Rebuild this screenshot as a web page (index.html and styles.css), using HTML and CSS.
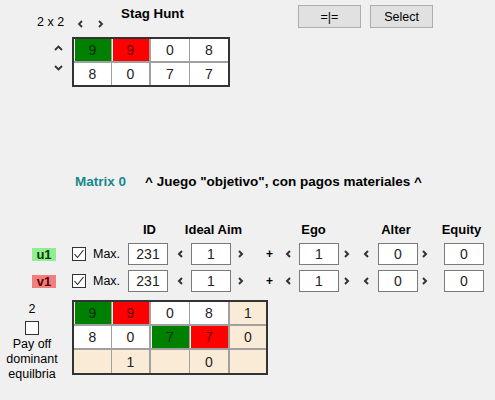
FILE: index.html
```html
<!DOCTYPE html>
<html>
<head>
<meta charset="utf-8">
<title>Stag Hunt</title>
<link rel="stylesheet" href="styles.css">
</head>
<body>
<div class="app">
  <section class="head">
    <div class="gamebox">
      <div class="titlerow">
        <span class="size">2 x 2</span>
        <span class="nav">
          <svg class="chev-h" viewBox="0 0 7 8"><polyline points="5,1 2,4 5,7"/></svg>
          <svg class="chev-h" viewBox="0 0 7 8"><polyline points="2,1 5,4 2,7"/></svg>
        </span>
        <span class="gamename">Stag Hunt</span>
      </div>
      <div class="matrixrow">
        <div class="updown">
          <svg class="chev-v" viewBox="0 0 9 6"><polyline points="1,5 4.5,1.5 8,5"/></svg>
          <svg class="chev-v" viewBox="0 0 9 6"><polyline points="1,1 4.5,4.5 8,1"/></svg>
        </div>
        <div class="matrix m4">
          <div class="cell g">9</div><div class="cell r sep">9</div><div class="cell">0</div><div class="cell">8</div>
          <div class="cell">8</div><div class="cell sep">0</div><div class="cell">7</div><div class="cell">7</div>
        </div>
      </div>
    </div>
    <div class="buttons">
      <button class="btn">=|=</button>
      <button class="btn">Select</button>
    </div>
  </section>

  <div class="caption"><span class="mname">Matrix 0</span><span class="mdesc">^ Juego "objetivo", con pagos materiales ^</span></div>

  <div class="params">
    <div class="hdr">
      <span class="h-id">ID</span>
      <span class="h-aim">Ideal Aim</span>
      <span class="h-ego">Ego</span>
      <span class="h-alter">Alter</span>
      <span class="h-eq">Equity</span>
    </div>
    <div class="row">
      <div class="who">
        <span class="tag u">u1</span>
        <svg class="chk" viewBox="0 0 14 14"><rect x="0.5" y="0.5" width="13" height="13"/><polyline points="2.5,7 5.5,10.5 11.5,3"/></svg>
        <span class="max">Max.</span>
      </div>
      <div class="box">231</div>
      <svg class="arr a1" viewBox="0 0 7 8"><polyline points="5,1 2,4 5,7"/></svg>
      <div class="box b1">1</div>
      <svg class="arr a2" viewBox="0 0 7 8"><polyline points="2,1 5,4 2,7"/></svg>
      <span class="plus">+</span>
      <svg class="arr a3" viewBox="0 0 7 8"><polyline points="5,1 2,4 5,7"/></svg>
      <div class="box b1">1</div>
      <svg class="arr a4" viewBox="0 0 7 8"><polyline points="2,1 5,4 2,7"/></svg>
      <svg class="arr a5" viewBox="0 0 7 8"><polyline points="5,1 2,4 5,7"/></svg>
      <div class="box b2">0</div>
      <svg class="arr a6" viewBox="0 0 7 8"><polyline points="2,1 5,4 2,7"/></svg>
      <div class="box b3">0</div>
    </div>
    <div class="row">
      <div class="who">
        <span class="tag v">v1</span>
        <svg class="chk" viewBox="0 0 14 14"><rect x="0.5" y="0.5" width="13" height="13"/><polyline points="2.5,7 5.5,10.5 11.5,3"/></svg>
        <span class="max">Max.</span>
      </div>
      <div class="box">231</div>
      <svg class="arr a1" viewBox="0 0 7 8"><polyline points="5,1 2,4 5,7"/></svg>
      <div class="box b1">1</div>
      <svg class="arr a2" viewBox="0 0 7 8"><polyline points="2,1 5,4 2,7"/></svg>
      <span class="plus">+</span>
      <svg class="arr a3" viewBox="0 0 7 8"><polyline points="5,1 2,4 5,7"/></svg>
      <div class="box b1">1</div>
      <svg class="arr a4" viewBox="0 0 7 8"><polyline points="2,1 5,4 2,7"/></svg>
      <svg class="arr a5" viewBox="0 0 7 8"><polyline points="5,1 2,4 5,7"/></svg>
      <div class="box b2">0</div>
      <svg class="arr a6" viewBox="0 0 7 8"><polyline points="2,1 5,4 2,7"/></svg>
      <div class="box b3">0</div>
    </div>
  </div>

  <section class="bottom">
    <div class="pay">
      <span class="num">2</span>
      <svg class="chk2" viewBox="0 0 14 14"><rect x="0.5" y="0.5" width="13" height="13"/></svg>
      <span>Pay off</span>
      <span>dominant</span>
      <span>equilbria</span>
    </div>
    <div class="matrix m5">
      <div class="cell g">9</div><div class="cell r sep">9</div><div class="cell">0</div><div class="cell sep">8</div><div class="cell b">1</div>
      <div class="cell">8</div><div class="cell sep">0</div><div class="cell g">7</div><div class="cell r sep">7</div><div class="cell b">0</div>
      <div class="cell b"></div><div class="cell b sep">1</div><div class="cell b"></div><div class="cell b sep">0</div><div class="cell b"></div>
    </div>
  </section>
</div>
</body>
</html>
```

FILE: styles.css
```css
html, body {
  margin: 0;
  padding: 0;
}
body {
  background: #f0f0f0;
  font-family: "Liberation Sans", Arial, sans-serif;
  color: #000;
  width: 495px;
  height: 400px;
  overflow: hidden;
}
svg polyline {
  fill: none;
  stroke: #333;
  stroke-width: 1.8;
}

/* top */
.head {
  display: flex;
  height: 88px;
}
.gamebox {
  margin-left: 37px;
  width: 193px;
  flex: none;
}
.titlerow {
  display: flex;
  align-items: flex-start;
  height: 37px;
}
.size {
  font-size: 12.5px;
  line-height: 14px;
  margin-top: 15px;
}
.nav {
  display: flex;
  gap: 13px;
  margin-left: 13px;
  margin-top: 20px;
}
.chev-h {
  width: 7px;
  height: 8px;
  display: block;
}
.gamename {
  font-weight: bold;
  font-size: 13.3px;
  line-height: 16px;
  margin-left: 17px;
  margin-top: 6px;
}
.matrixrow {
  display: flex;
}
.updown {
  width: 35px;
  flex: none;
  display: flex;
  flex-direction: column;
  gap: 14px;
  padding-top: 8px;
  padding-left: 17px;
  box-sizing: border-box;
}
.chev-v {
  width: 9px;
  height: 6px;
  display: block;
}

/* matrices */
.matrix {
  display: grid;
  border: 2px solid #333;
  background: #a0a0a0;
  column-gap: 1px;
  row-gap: 2px;
  align-self: flex-start;
}
.m4 {
  grid-template-columns: 37px 38px 38px 38px;
  grid-template-rows: 22px 22px;
}
.m5 {
  grid-template-columns: 37px 38px 38px 39px 36px;
  grid-template-rows: 22px 22px 23px;
  margin-left: 8px;
}
.cell {
  background: #fff;
  display: flex;
  align-items: center;
  justify-content: center;
  font-size: 14px;
  color: #222;
}
.cell.sep {
  margin-right: 1px;
}
.cell.g {
  background: #008000;
  color: #0a2d0a;
  box-shadow: inset 1px 0 0 #fff;
}
.cell.r {
  background: #ff0000;
  color: #6e0000;
  box-shadow: inset 1px 0 0 #fff;
}
.cell.b {
  background: #faebd7;
}

/* buttons */
.buttons {
  display: flex;
  gap: 9px;
  margin-left: 68px;
  margin-top: 5px;
  align-self: flex-start;
}
.btn {
  width: 63px;
  height: 23px;
  padding: 0;
  background: #e1e1e1;
  border: 1px solid #adadad;
  border-radius: 0;
  font-family: "Liberation Sans", Arial, sans-serif;
  font-size: 12.5px;
  color: #000;
}

/* caption */
.caption {
  display: flex;
  margin-top: 86px;
  padding-left: 75px;
  font-weight: bold;
  font-size: 13.5px;
  line-height: 16px;
}
.mname {
  color: #148a8a;
}
.mdesc {
  margin-left: 19px;
}

/* parameters */
.params {
  margin-top: 32px;
  display: flex;
  flex-direction: column;
  gap: 5px;
}
.hdr {
  display: flex;
  height: 16px;
  font-weight: bold;
  font-size: 13px;
  line-height: 16px;
}
.hdr span {
  text-align: center;
  white-space: nowrap;
  flex: none;
}
.h-id { margin-left: 128px; width: 43px; }
.h-aim { margin-left: 9px; width: 67px; }
.h-ego { margin-left: 43px; width: 47px; }
.h-alter { margin-left: 39px; width: 40px; }
.h-eq { margin-left: 24px; width: 43px; }

.row {
  display: flex;
  align-items: center;
  height: 22px;
}
.who {
  width: 128px;
  flex: none;
  display: flex;
  align-items: center;
}
.tag {
  margin-left: 32px;
  width: 24px;
  height: 13px;
  line-height: 13px;
  font-weight: bold;
  font-size: 13px;
  text-align: center;
}
.tag.u {
  background: #90ee90;
  color: #0a3a0a;
}
.tag.v {
  background: #f08080;
  color: #5a0000;
}
.chk, .chk2 {
  width: 14px;
  height: 14px;
  display: block;
  flex: none;
}
.chk rect, .chk2 rect {
  fill: #fff;
  stroke: #333;
  stroke-width: 1;
}
.chk polyline {
  stroke: #222;
  stroke-width: 1.1;
}
.chk {
  margin-left: 16px;
}
.max {
  margin-left: 7px;
  font-size: 12.5px;
}
.box {
  width: 40px;
  height: 22px;
  box-sizing: border-box;
  border: 1px solid #7a7a7a;
  background: #fff;
  font-size: 14px;
  line-height: 20px;
  text-align: center;
  color: #222;
  flex: none;
}
.arr {
  width: 7px;
  height: 8px;
  display: block;
  flex: none;
}
.arr polyline {
  stroke-width: 2;
}
.a1 { margin-left: 9px; }
.b1 { margin-left: 7px; }
.a2 { margin-left: 6px; }
.plus {
  margin-left: 22px;
  width: 7px;
  font-weight: bold;
  font-size: 12px;
  line-height: 12px;
  text-align: center;
}
.a3 { margin-left: 12px; }
.a4 { margin-left: 4px; }
.a5 { margin-left: 13px; }
.b2 { margin-left: 8px; }
.a6 { margin-left: 3px; }
.b3 { margin-left: 16px; }

/* bottom */
.bottom {
  display: flex;
  margin-top: 8px;
}
.pay {
  width: 64px;
  flex: none;
  display: flex;
  flex-direction: column;
  align-items: center;
  font-size: 12.5px;
  line-height: 15px;
}
.pay .num {
  margin-top: 2px;
  line-height: 14px;
}
.chk2 {
  margin: 5px 0 2px 0;
}
```
